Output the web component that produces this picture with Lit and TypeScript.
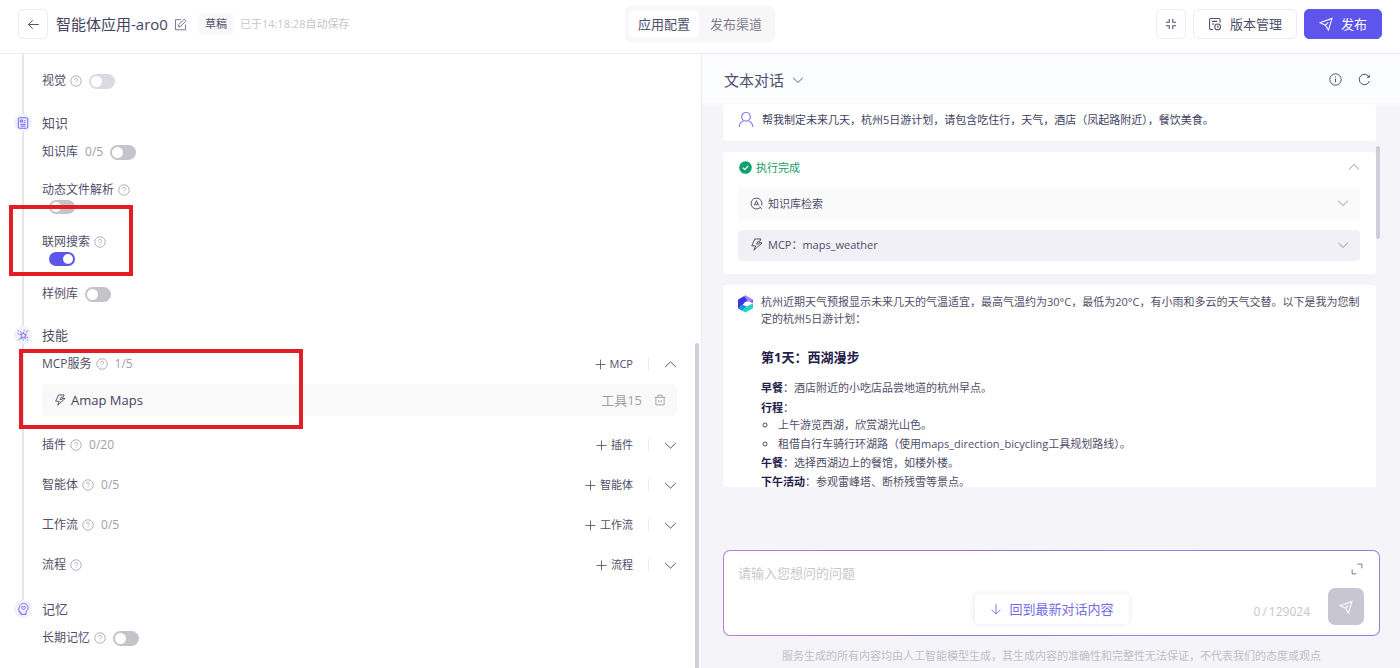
import { LitElement, html, css, svg, nothing, TemplateResult } from "lit";
import { customElement, state } from "lit/decorators.js";

const glyphs: Record<string, TemplateResult> = {
  back: svg`<path d="M14.500 8H1.800M7 2.800L1.800 8L7 13.200"/>`,
  edit: svg`<path d="M8.500 2H1.800v12.500h12.400V8"/><path d="M5.500 10.800l.6-3L12.600 1.300l2.200 2.200L8.300 10.100z"/>`,
  shrink: svg`<path d="M6 2.200V6H2.200M10 2.200V6h3.800M6 13.800V10H2.200M10 13.800V10h3.800"/>`,
  history: svg`<path d="M13.800 6.500V3.200a1.400 1.400 0 0 0-1.400-1.400H3.200A1.400 1.400 0 0 0 1.800 3.200v9.600a1.400 1.400 0 0 0 1.400 1.400H6M4.500 5h6M4.500 8h2.500"/><circle cx="11" cy="11.300" r="3.300"/><path d="M11 9.600v1.900h1.500"/>`,
  send: svg`<path d="M1 6.500L14.800 1.600L10.800 15L7.400 9.400z"/><path d="M7.400 9.400L10.600 6"/>`,
  info: svg`<circle cx="8" cy="8" r="7"/><path d="M8 7v4.500M8 4.200v1.300"/>`,
  refresh: svg`<path d="M14 10A6.400 6.400 0 1 1 13.600 5"/><path d="M14.500 2.500L13.800 5.400L11 5"/>`,
  help: svg`<circle cx="8" cy="8" r="7"/><path d="M6 6.500a2 2 0 1 1 3 1.700c-.7.4-1 .7-1 1.500M8 11.200v1"/>`,
  down: svg`<path d="M1.500 5l6.500 6.300L14.500 5"/>`,
  up: svg`<path d="M1.500 11L8 4.700l6.500 6.300"/>`,
  plus: svg`<path d="M8 .8v14.400M.8 8h14.400"/>`,
  bolt: svg`<path d="M6 1.200h7.500L11 6h3.800L4.800 15L7 9.700H2.200z"/><path d="M10.500 3.500L8 7.400h3.200"/>`,
  trash: svg`<path d="M1 4.500h14M2.500 4.500V14.500h11V4.500M5.200 4.200V1.500h5.600v2.700M6.300 8v3.200M9.700 8v3.200"/>`,
  search: svg`<path d="M12.500 13A6.700 6.700 0 1 1 14.300 10.300M12 12l2.500 2.700"/><path d="M5.300 10.500L8 4.500l2.700 6M6.500 9h3"/>`,
  user: svg`<circle cx="8" cy="5.300" r="4.300"/><path d="M1.200 15.500c.2-3 1.800-5.200 4.300-6M14.800 15.500c-.2-3-1.800-5.200-4.300-6"/>`,
  doc: svg`<rect x="1.700" y="1" width="12.600" height="14" rx="1.800"/><path d="M4.500 4h3v3.200L6 6.300L4.500 7.200zM9.500 5h2M9.500 7.500h2M4.500 9.800h7M4.500 12.200h7"/>`,
  magic: svg`<path d="M8.500 4.500l1.200 2.600l2.900.4l-2 2l.5 3l-2.600-1.400l-2.600 1.400l.5-3l-2.100-2l2.900-.4zM12 5L14.500 2M6.200 5.500L4.200 3M5 12L2 14.500M12.800 10.500l2 1.300M.8 6.500H3M1.200 2.500h1.300M9.500 1v1.700M13.200 14.500h1.300M8.500 13.500V15"/>`,
  mind: svg`<path d="M5.200 15.200v-2.700H3.200V9.800L1.600 9l1.500-2.600A5.800 5.800 0 1 1 12 11.200v4z"/><path d="M8.800 9.200L6.500 6.900a1.300 1.300 0 0 1 2.300-1.600a1.300 1.300 0 0 1 2.300 1.600z"/>`,
  expand: svg`<path d="M8.500 1.500h6V7M1.500 8.500v6h5.500"/>`,
  arrowDown: svg`<path d="M8 1v13.500M2 9l6 5.700L14 9"/>`,
};

const icon = (name: string, cls = "") =>
  html`<svg class="icon ${cls}" viewBox="0 0 16 16" aria-hidden="true">${glyphs[name]}</svg>`;

interface Skill {
  name: string;
  count?: string;
  add: string;
}

@customElement("app-root")
export class AppRoot extends LitElement {
  @state() private skills: Skill[] = [
    { name: "插件", count: "0/20", add: "插件" },
    { name: "智能体", count: "0/5", add: "智能体" },
    { name: "工作流", count: "0/5", add: "工作流" },
    { name: "流程", add: "流程" },
  ];

  static styles = css`
    :host {
      display: flex;
      flex-direction: column;
      height: 100vh;
      overflow: hidden;
      background: #fff;
      color: #504e68;
      font: 12px/20px "Open Sans", "Noto Sans CJK SC", sans-serif;
    }
    * { box-sizing: border-box; }
    button, select, textarea { font: inherit; color: inherit; margin: 0; }
    button { border: 0; background: none; padding: 0; display: flex; align-items: center; justify-content: center; }
    h1, h2, h3, p, ul { margin: 0; padding: 0; font-weight: 400; }
    .icon { width: 12px; height: 12px; flex: none; fill: none; stroke: currentColor; stroke-width: 1.2; display: block; }
    .i10 { width: 11px; height: 11px; }
    .i13 { width: 13px; height: 13px; }
    .i14 { width: 14px; height: 14px; }
    .help { color: #a3a1ad; stroke-width: 1.1; margin-left: 4px; }

    header {
      display: grid;
      grid-template-columns: 1fr auto 1fr;
      align-items: center;
      padding: 6px 18px 11px;
      border-bottom: 1px solid #ececf0;
    }
    .lead, .tools { display: flex; align-items: center; }
    .tools { justify-content: flex-end; gap: 7px; }
    .box { height: 30px; min-width: 30px; border: 1px solid #ececf1; border-radius: 5px; font-size: 13px; }
    .wide { padding: 0 14px; gap: 8px; }
    .primary { background: #5d55ec; border-color: #5d55ec; color: #fff; padding: 0 14px; gap: 8px; }
    h1 { font-size: 15px; margin-left: 8px; color: #45435e; }
    .edit { margin-left: 6px; color: #77758a; }
    .badge { margin-left: 11px; padding: 0 7px; border-radius: 4px; background: #f8f8fb; font-size: 11px; }
    .saved { margin-left: 6px; font-size: 11px; color: #c6c5ce; }
    .tabs { display: flex; gap: 2px; padding: 4px; border-radius: 6px; background: #f7f7fa; font-size: 13px; }
    .tabs button { height: 28px; padding: 0 9px; border-radius: 4px; color: #7f7d8c; }
    .tabs .on { background: #fff; color: #504e68; }

    main { flex: 1; min-height: 0; display: grid; grid-template-columns: calc(50% + 1px) 1fr; }
    .config { position: relative; overflow: hidden; padding-right: 24px; }
    .section { display: flex; gap: 10px; padding-left: 14px; }
    .rail { width: 18px; display: flex; flex-direction: column; align-items: center; }
    .rail::after { content: ""; flex: 1; width: 2px; background: #e6e6ea; }
    .section:last-of-type .rail::after { display: none; }
    .mark { width: 18px; height: 18px; border-radius: 50%; background: #f1f0fd; color: #6259ea; display: grid; place-items: center; }
    .body { flex: 1; min-width: 0; }
    h2 { font-size: 13px; line-height: 18px; }
    .vision { padding: 17px 0 23px; }
    .knowledge { padding-bottom: 22px; }
    .settings { margin-top: 10px; display: flex; flex-direction: column; gap: 18px; }
    .skills { padding-bottom: 15px; }
    .field { display: flex; align-items: center; }
    .stacked { flex-direction: column; align-items: flex-start; }
    .name { display: flex; align-items: center; }
    .count { margin-left: 7px; color: #a09eaa; }
    .switch {
      appearance: none; width: 26px; height: 15px; margin: 0 0 0 7px; padding: 2px;
      border-radius: 8px; background: #c5c4cb; display: flex;
    }
    .stacked .switch { height: 14px; }
    .switch::before { content: ""; width: 11px; height: 11px; border-radius: 50%; background: #fff; }
    .stacked .switch::before { width: 10px; height: 10px; }
    .switch:checked { background: #5d55ec; justify-content: flex-end; }
    .switch:disabled { background: #dbdae0; }
    .skill { display: flex; align-items: center; height: 40px; }
    .add { margin-left: auto; gap: 4px; font-size: 11px; }
    .rule { width: 1px; height: 12px; margin: 0 15px; background: #e9e9ee; }
    .tool { display: flex; align-items: center; height: 32px; margin-bottom: 9px; padding: 0 11px 0 12px; border-radius: 4px; background: #f9f9fa; font-size: 13px; }
    .tool .title { margin-left: 5px; color: #45435e; }
    .tool .amount { margin-left: auto; margin-right: 12px; color: #a09eaa; }
    .tool button { color: #9c9aa7; }
    .thumb { position: absolute; right: 2px; top: 289px; bottom: 0; width: 4px; border-radius: 2px 2px 0 0; background: #cfcedd; }
    .frame { position: absolute; border: 4px solid #e41c24; pointer-events: none; }
    .frame-search { left: 9px; top: 151px; width: 124px; height: 71px; }
    .frame-mcp { left: 19px; top: 295px; width: 284px; height: 80px; }

    .chat { min-width: 0; min-height: 0; display: flex; flex-direction: column; padding: 0 20px 2px 21px; border-left: 1px solid #ececf1; background: linear-gradient(#fafcfe 48px, #f4f4f9 52px); }
    .chat-head { flex: none; height: 50px; padding: 1px 9px 0 1px; display: flex; align-items: center; gap: 16px; }
    .mode { display: grid; align-items: center; margin-right: auto; }
    .mode select { grid-area: 1 / 1; appearance: none; border: 0; background: none; padding: 0 19px 0 0; font-size: 15px; height: 24px; }
    .mode .icon { grid-area: 1 / 1; justify-self: end; pointer-events: none; }
    .log { flex: 1; min-height: 0; display: flex; margin-bottom: 63px; overflow: hidden; font-size: 11px; line-height: 17px; }
    .cards { flex: 1; min-width: 0; display: flex; flex-direction: column; gap: 11px; }
    .bar { flex: none; width: 4px; height: 93px; margin-top: 42px; border-radius: 2px; background: #cfced8; }
    .card { flex: none; background: #fff; border-radius: 3px; padding: 0 16px 0 15px; }
    .ask { display: flex; gap: 8px; padding-top: 7px; padding-bottom: 13px; color: #403e60; }
    .ask .icon { width: 16px; height: 17px; color: #8d7bea; }
    .done { padding-top: 6px; padding-bottom: 13px; }
    .done-head { display: flex; align-items: center; gap: 4px; height: 18px; margin-bottom: 12px; padding-left: 1px; color: #12a06c; }
    .tick { width: 13px; height: 13px; }
    .done-head button { margin-left: auto; color: #8b8998; }
    .step { display: flex; align-items: center; gap: 5px; height: 32px; padding: 0 11px 2px 12px; border-radius: 4px; background: #fafafb; }
    .step + .step { margin-top: 10px; height: 31px; background: #f1f0f7; }
    .step button { margin-left: auto; color: #8b8998; }
    .reply { display: flex; gap: 7px; padding: 8px 12px 0 14px; color: #504e68; }
    .logo { flex: none; width: 17px; height: 18px; margin-top: 2px; }
    .text { flex: 1; min-width: 0; }
    h3 { margin: 20px 0 12px; font-size: 13px; line-height: 20px; font-weight: 700; color: #22204a; }
    b { font-weight: 600; color: #22204a; }
    .text .meal { margin-bottom: 3px; }
    .text ul { padding-left: 17px; list-style: circle; }
    .text li, .text .next { margin-bottom: 2px; }

    .composer { flex: none; position: relative; border: 1px solid transparent; border-radius: 7px; padding: 11px 15px 10px 14px; background: linear-gradient(#fff, #fff) padding-box, linear-gradient(90deg, #b87dd2, #9a70c4 45%, #8f86e6 60%, #8f80e0) border-box; }
    .entry { display: flex; justify-content: space-between; margin-bottom: 4px; }
    textarea { flex: 1; height: 22px; padding: 0; border: 0; outline: 0; resize: none; background: none; font-size: 13px; line-height: 22px; overflow: hidden; }
    textarea::placeholder { color: #c8c7cf; opacity: 1; }
    .entry button { height: 14px; margin-right: 1px; color: #6b697c; }
    .submit { display: flex; justify-content: flex-end; align-items: center; gap: 18px; }
    .limit { display: flex; gap: 2px; font-size: 12px; color: #c6c5ce; padding-top: 10px; }
    .send { width: 36px; height: 37px; border-radius: 7px; background: #c8c6d0; color: #fff; }
    .latest { position: absolute; left: 50%; bottom: 11px; transform: translateX(-50%); height: 30px; padding: 0 15px; gap: 8px; white-space: nowrap; border-radius: 4px; background: #fff; box-shadow: 0 0 6px #1e1c4618; color: #736be6; font-size: 13px; }
    .note { flex: none; margin-top: 10px; text-align: center; font-size: 11px; color: #c0bfc9; }
  `;

  private toggle(id: string, name: string, o: { help?: boolean; count?: string; stacked?: boolean; on?: boolean; off?: boolean } = {}) {
    return html`<div class="field ${o.stacked ? "stacked" : ""}">
      <div class="name">
        <label for=${id}>${name}</label>
        ${o.help ? icon("help", "help") : nothing}
        ${o.count ? html`<span class="count">${o.count}</span>` : nothing}
      </div>
      <input class="switch" type="checkbox" role="switch" id=${id} ?checked=${o.on} ?disabled=${o.off} />
    </div>`;
  }

  private skill(s: Skill, open = false) {
    return html`<div class="skill">
      <span>${s.name}</span>${icon("help", "help")}
      ${s.count ? html`<span class="count">${s.count}</span>` : nothing}
      <button class="add">${icon("plus", "i10")}${s.add}</button>
      <span class="rule"></span>
      <button aria-label=${open ? "收起" : "展开"}>${icon(open ? "up" : "down", "i13")}</button>
    </div>`;
  }

  private rail(name?: string) {
    return html`<div class="rail">${name ? html`<span class="mark">${icon(name)}</span>` : nothing}</div>`;
  }

  render() {
    return html`
      <header>
        <div class="lead">
          <button class="box" aria-label="返回">${icon("back", "i13")}</button>
          <h1>智能体应用-aro0</h1>
          <button class="edit" aria-label="编辑">${icon("edit", "i13")}</button>
          <span class="badge">草稿</span>
          <span class="saved">已于14:18:28自动保存</span>
        </div>
        <nav class="tabs">
          <button class="on">应用配置</button>
          <button>发布渠道</button>
        </nav>
        <div class="tools">
          <button class="box" aria-label="收缩">${icon("shrink", "i14")}</button>
          <button class="box wide">${icon("history", "i14")}版本管理</button>
          <button class="box primary">${icon("send", "i14")}发布</button>
        </div>
      </header>
      <main>
        <div class="config">
          <section class="section">
            ${this.rail()}
            <div class="body vision">${this.toggle("vision", "视觉", { help: true, off: true })}</div>
          </section>
          <section class="section">
            ${this.rail("doc")}
            <div class="body knowledge">
              <h2>知识</h2>
              <div class="settings">
                ${this.toggle("kb", "知识库", { count: "0/5" })}
                ${this.toggle("files", "动态文件解析", { help: true, stacked: true })}
                ${this.toggle("web", "联网搜索", { help: true, stacked: true, on: true })}
                ${this.toggle("samples", "样例库")}
              </div>
            </div>
          </section>
          <section class="section">
            ${this.rail("magic")}
            <div class="body skills">
              <h2>技能</h2>
              ${this.skill({ name: "MCP服务", count: "1/5", add: "MCP" }, true)}
              <div class="tool">
                ${icon("bolt")}<span class="title">Amap Maps</span>
                <span class="amount">工具15</span>
                <button aria-label="删除">${icon("trash")}</button>
              </div>
              ${this.skills.map((s) => this.skill(s))}
            </div>
          </section>
          <section class="section">
            ${this.rail("mind")}
            <div class="body">
              <h2>记忆</h2>
              <div class="settings">${this.toggle("memory", "长期记忆", { help: true })}</div>
            </div>
          </section>
          <div class="thumb"></div>
          <div class="frame frame-search"></div>
          <div class="frame frame-mcp"></div>
        </div>

        <div class="chat">
          <div class="chat-head">
            <div class="mode">
              <select aria-label="对话模式"><option>文本对话</option></select>
              ${icon("down")}
            </div>
            <button aria-label="说明">${icon("info", "i13")}</button>
            <button aria-label="刷新">${icon("refresh", "i13")}</button>
          </div>
          <div class="log">
            <div class="cards">
              <div class="card ask">
                ${icon("user")}
                <p>帮我制定未来几天，杭州5日游计划，请包含吃住行，天气，酒店（凤起路附近），餐饮美食。</p>
              </div>
              <div class="card done">
                <div class="done-head">
                  <svg class="tick" viewBox="0 0 14 14" aria-hidden="true"><circle cx="7" cy="7" r="6.800" fill="#12a06c"/><path d="M4.200 7.200l2 2l3.700-3.900" fill="none" stroke="#fff" stroke-width="1.300"/></svg>
                  执行完成
                  <button aria-label="收起">${icon("up")}</button>
                </div>
                <div class="step">${icon("search", "i13")}知识库检索<button aria-label="展开">${icon("down")}</button></div>
                <div class="step">${icon("bolt", "i13")}MCP：maps_weather<button aria-label="展开">${icon("down")}</button></div>
              </div>
              <div class="card reply">
                <svg class="logo" viewBox="0 0 16 18" aria-hidden="true">
                  <path d="M8 .5L15.500 4.700V8L8 9.500L.5 4.700z" fill="#8a68f2"/>
                  <path d="M.5 4.700L8 .5L9.500 5L6 9L.5 13.500z" fill="#3d35e2"/>
                  <path d="M8 .5L15.500 4.700L11.500 6.500L6.500 1.500z" fill="#a58cf7"/>
                  <path d="M7.500 7L11.500 6.300L15.500 8.500L9 11.500L5.500 10z" fill="#fff"/>
                  <path d="M.5 13.500L5 9.800L9 11.500L15.500 8.500V13.300L8 17.500z" fill="#25d3c8"/>
                  <path d="M.5 13.500L5 9.800L8.800 11.500L4.500 15.600z" fill="#1f8fea"/>
                </svg>
                <div class="text">
                  <p>杭州近期天气预报显示未来几天的气温适宜，最高气温约为30°C，最低为20°C，有小雨和多云的天气交替。以下是我为您制定的杭州5日游计划：</p>
                  <h3>第1天：西湖漫步</h3>
                  <p class="meal"><b>早餐</b>：酒店附近的小吃店品尝地道的杭州早点。</p>
                  <p><b>行程</b>：</p>
                  <ul>
                    <li>上午游览西湖，欣赏湖光山色。</li>
                    <li>租借自行车骑行环湖路（使用maps_direction_bicycling工具规划路线）。</li>
                  </ul>
                  <p class="next"><b>午餐</b>：选择西湖边上的餐馆，如楼外楼。</p>
                  <p><b>下午活动</b>：参观雷峰塔、断桥残雪等景点。</p>
                </div>
              </div>
            </div>
            <div class="bar"></div>
          </div>
          <div class="composer">
            <div class="entry">
              <textarea rows="1" aria-label="问题" placeholder="请输入您想问的问题"></textarea>
              <button aria-label="展开输入框">${icon("expand")}</button>
            </div>
            <div class="submit">
              <span class="limit"><span>0</span><span>/</span><span>129024</span></span>
              <button class="send" aria-label="发送">${icon("send", "i14")}</button>
            </div>
            <button class="latest">${icon("arrowDown")}回到最新对话内容</button>
          </div>
          <p class="note">服务生成的所有内容均由人工智能模型生成，其生成内容的准确性和完整性无法保证，不代表我们的态度或观点</p>
        </div>
      </main>
    `;
  }
}
